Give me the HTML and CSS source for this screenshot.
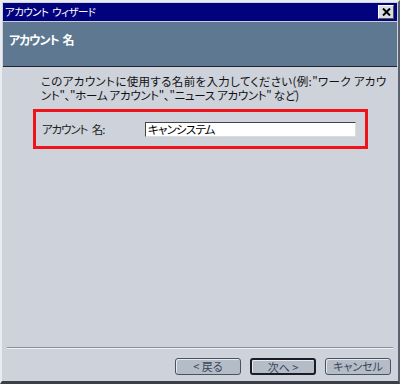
FILE: index.html
```html
<!DOCTYPE html>
<html lang="ja">
<head>
    <meta charset="UTF-8">
    <title>アカウント ウィザード</title>
    <link rel="stylesheet" href="styles.css">
</head>
<body>
    <div class="window">
        <div class="titlebar">
            <span class="title">アカウント ウィザード</span>
            <span class="close">
                <svg width="9" height="8" viewBox="0 0 9 8"><path d="M1 0.5 L8 7.5 M8 0.5 L1 7.5" stroke="#000" stroke-width="2"/></svg>
            </span>
        </div>
        <div class="header">アカウント 名</div>
        <div class="content">
            <p class="desc">
                <span class="line first">このアカウントに使用する名前を入力してください(例:"ワーク アカウ</span>
                <span class="line second">ント"、"ホーム アカウント"、"ニュース アカウント" など)</span>
            </p>
            <div class="highlight">
                <label class="label" for="acct">アカウント 名:</label>
                <input class="field" id="acct" type="text" value="キャンシステム">
            </div>
        </div>
        <div class="footer">
            <button class="btn">&lt; 戻る</button>
            <button class="btn default">次へ &gt;</button>
            <button class="btn">キャンセル</button>
        </div>
    </div>
</body>
</html>
```

FILE: styles.css
```css
body {
    margin: 0;
    background: #cdd2db;
    font-family: "Noto Sans CJK JP", "Noto Sans", sans-serif;
    font-size: 12px;
    font-feature-settings: "palt";
}
.window {
    width: 400px;
    height: 384px;
    box-sizing: border-box;
    border-top: 2px solid #e8ebf0;
    border-left: 2px solid #e8ebf0;
    border-right: 2px solid #5a6270;
    border-bottom: 3px solid #3a3f48;
    padding: 1px;
    display: flex;
    flex-direction: column;
    background: #cdd2db;
}
.titlebar {
    height: 18px;
    background: #02027e;
    color: #fff;
    display: flex;
    align-items: center;
    justify-content: space-between;
    padding: 0 3px 0 2px;
    border-bottom: 1px solid #c8ccd4;
}
.title {
    font-size: 10.5px;
    line-height: 18px;
    letter-spacing: -0.6px;
    word-spacing: 2px;
}
.close {
    width: 16px;
    height: 14px;
    background: #d8dce2;
    border: 1px solid #fff;
    border-right-color: #555;
    border-bottom-color: #555;
    box-sizing: border-box;
    display: flex;
    align-items: center;
    justify-content: center;
}
.header {
    height: 45px;
    background: #5e7891;
    color: #fff;
    font-weight: bold;
    font-size: 12px;
    letter-spacing: -1px;
    word-spacing: 2px;
    padding: 9px 0 0 6px;
    box-sizing: border-box;
    border-bottom: 1px solid #1e2530;
}
.content {
    flex: 1;
    padding: 7px 0 0 30px;
}
.desc {
    margin: 0 0 0 8px;
    color: #111;
    font-size: 11.5px;
    white-space: nowrap;
}
.line {
    display: block;
    height: 14px;
    line-height: 14px;
}
.first {
    letter-spacing: 0.35px;
}
.second {
    letter-spacing: -0.3px;
}
.highlight {
    margin-top: 7px;
    width: 335px;
    height: 40px;
    box-sizing: border-box;
    border: 3px solid #f0141a;
    display: flex;
    align-items: center;
    padding-left: 6px;
}
.label {
    width: 103px;
    color: #222;
    font-size: 11.5px;
    letter-spacing: -1.1px;
    word-spacing: 3px;
}
.field {
    width: 211px;
    height: 15px;
    box-sizing: border-box;
    border: 1px solid #444;
    border-right-color: #ddd;
    border-bottom-color: #ddd;
    font-family: inherit;
    font-size: 11.5px;
    font-feature-settings: "palt";
    letter-spacing: -0.8px;
    padding: 0 2px;
    outline: none;
}
.footer {
    margin: 0 4px;
    border-top: 1px solid #8a909a;
    box-shadow: inset 0 1px 0 #eef0f3;
    height: 33px;
    display: flex;
    justify-content: flex-end;
    align-items: center;
    gap: 9px;
    padding: 4px 2px 0 0;
    box-sizing: border-box;
}
.btn {
    width: 66px;
    height: 17px;
    border: 1px solid #4a5260;
    border-radius: 3px;
    background: #b4bcc8;
    box-shadow: inset 1px 1px 0 #e6e9ee;
    color: #3a4558;
    font-family: inherit;
    font-size: 11px;
    font-feature-settings: "palt";
    padding: 0;
    line-height: 15px;
}
.default {
    border: 2px solid #1a1e24;
}
```
